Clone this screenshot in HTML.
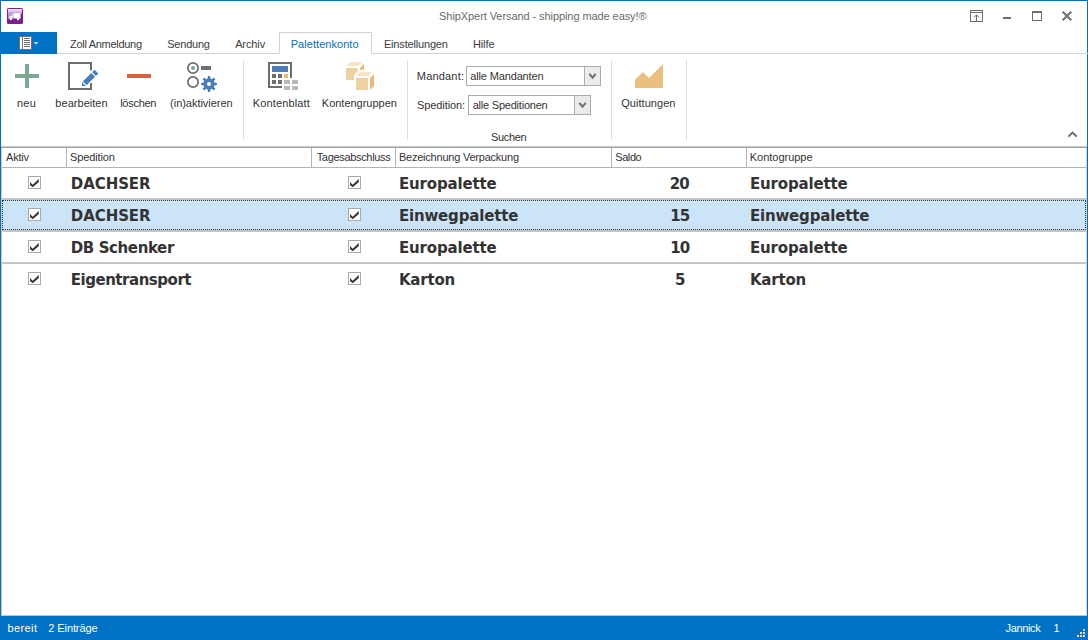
<!DOCTYPE html>
<html lang="de">
<head>
<meta charset="utf-8">
<title>ShipXpert Versand - shipping made easy!</title>
<style>
*{box-sizing:border-box;margin:0;padding:0}
html,body{width:1088px;height:640px;overflow:hidden;background:#fff}
body{font-family:"Liberation Sans",sans-serif;font-size:11px;color:#333;position:relative}
#win{position:absolute;left:0;top:0;width:1088px;height:640px;border:1px solid #0072c6;border-bottom:none;background:#fff}
.t{position:absolute;white-space:pre;line-height:14px;height:14px}
.abs{position:absolute}
/* title */
/* file tab */
#file{left:0;top:32px;width:57px;height:22px;background:#0072c6}
#tabline{left:57px;top:53px;width:1031px;height:1px;background:#d2d2d2}
#acttab{left:279px;top:32px;width:93px;height:22px;border:1px solid #d2d2d2;border-bottom:1px solid #fff;background:#fff}
.tab{top:37px;color:#3b3b3b}
.tab.on{color:#0072c6}
.sep{position:absolute;top:60px;width:1px;height:80px;background:#dcdcdc}
.lbl{top:96px;color:#333}
.combo{position:absolute;height:20px;border:1px solid #ababab;background:#fff}
.combo .btn{position:absolute;right:0;top:0;bottom:0;width:16px;background:#ebebeb;border-left:1px solid #ababab}
.combo .txt{position:absolute;left:4px;top:2px;line-height:14px;white-space:pre;color:#333}
/* grid */
#gtop1{left:1px;top:146px;width:1086px;height:1px;background:#c8c8c8}
#gtop2{left:1px;top:147px;width:1086px;height:1px;background:#a6a6a6}
#gleft{left:1px;top:148px;width:1px;height:468px;background:#cfc8c1}
#gright{left:1086px;top:148px;width:1px;height:468px;background:#d6d0ca}
#gbot{left:1px;top:615px;width:1086px;height:1px;background:#c9c0b8}
#hbot{left:2px;top:167px;width:1084px;height:1px;background:#b4b4b4}
.cs{position:absolute;top:148px;width:1px;height:19px;background:#b4b4b4}
.h{top:150px;color:#333}
.rl{position:absolute;left:2px;width:1084px;height:2px;background:#c4c4c4}
.b{position:absolute;white-space:pre;font-family:"DejaVu Sans","Liberation Sans",sans-serif;font-weight:bold;font-size:15px;line-height:20px;height:20px;color:#333}

.cb{position:absolute;width:13px;height:13px;border:1px solid #a8a8a8;background:#fff}
#sel{left:2px;top:200px;width:1084px;height:30px;background:#cce4f7;border:1px dotted #333}
/* status */
#status{left:0;top:616px;width:1088px;height:24px;background:#0072c6}
.st{color:#fff}
#icons{z-index:5;pointer-events:none}
.cb svg{display:block}
</style>
</head>
<body>
<div id="win"></div>
<div class="abs" id="tabline"></div>
<div class="abs" id="file"></div>
<div class="abs" id="acttab"></div>
<div class="sep" style="left:243px"></div>
<div class="sep" style="left:407px"></div>
<div class="combo" style="left:466px;top:66px;width:135px"><span class="btn"></span></div>
<div class="combo" style="left:468px;top:95px;width:123px"><span class="btn"></span></div>
<div class="sep" style="left:611px"></div>
<div class="sep" style="left:686px"></div>
<div class="abs" id="gtop1"></div><div class="abs" id="gtop2"></div>
<div class="abs" id="gleft"></div><div class="abs" id="gright"></div>
<div class="abs" id="hbot"></div><div class="abs" id="gbot"></div>
<div class="cs" style="left:66px"></div><div class="cs" style="left:311px"></div><div class="cs" style="left:395px"></div><div class="cs" style="left:611px"></div><div class="cs" style="left:746px"></div>
<div class="abs" id="sel"></div>
<div class="rl" style="top:198px"></div>
<div class="rl" style="top:230px"></div>
<div class="rl" style="top:262px"></div>
<div class="abs" id="status"></div>
<div class="t" id="title" style="left:439.12px;top:9px;letter-spacing:-0.077px;color:#6a6a6a">ShipXpert Versand - shipping made easy!®</div>
<div class="t tab" id="tb1" style="left:70.06px;top:37px;letter-spacing:-0.296px;">Zoll Anmeldung</div>
<div class="t tab" id="tb2" style="left:167.22px;top:37px;letter-spacing:-0.217px;">Sendung</div>
<div class="t tab" id="tb3" style="left:235.14px;top:37px;letter-spacing:-0.106px;">Archiv</div>
<div class="t tab on" id="tb4" style="left:290.74px;top:37px;letter-spacing:0.046px;">Palettenkonto</div>
<div class="t tab" id="tb5" style="left:383.94px;top:37px;letter-spacing:-0.174px;">Einstellungen</div>
<div class="t tab" id="tb6" style="left:472.94px;top:37px;letter-spacing:-0.108px;">Hilfe</div>
<div class="t lbl" id="l1" style="left:17.00px;top:96px;letter-spacing:0.200px;">neu</div>
<div class="t lbl" id="l2" style="left:55.35px;top:96px;letter-spacing:0.032px;">bearbeiten</div>
<div class="t lbl" id="l3" style="left:120.17px;top:96px;letter-spacing:-0.267px;">löschen</div>
<div class="t lbl" id="l4" style="left:170.09px;top:96px;letter-spacing:-0.030px;">(in)aktivieren</div>
<div class="t lbl" id="l5" style="left:252.75px;top:96px;letter-spacing:0.139px;">Kontenblatt</div>
<div class="t lbl" id="l6" style="left:321.82px;top:96px;letter-spacing:-0.016px;">Kontengruppen</div>
<div class="t lbl" id="l7" style="left:621.21px;top:96px;letter-spacing:0.052px;">Quittungen</div>
<div class="t" id="m1" style="left:416.80px;top:69px;letter-spacing:0.185px;">Mandant:</div>
<div class="t" id="m2" style="left:470.21px;top:69px;letter-spacing:-0.141px;">alle Mandanten</div>
<div class="t" id="m3" style="left:417.03px;top:98px;letter-spacing:-0.090px;">Spedition:</div>
<div class="t" id="m4" style="left:472.71px;top:98px;letter-spacing:-0.217px;">alle Speditionen</div>
<div class="t" id="m5" style="left:491.07px;top:130px;letter-spacing:-0.365px;">Suchen</div>
<div class="t h" id="h1" style="left:6.02px;top:150px;letter-spacing:-0.219px;">Aktiv</div>
<div class="t h" id="h2" style="left:70.07px;top:150px;letter-spacing:-0.134px;">Spedition</div>
<div class="t h" id="h3" style="left:316.66px;top:150px;letter-spacing:-0.320px;">Tagesabschluss</div>
<div class="t h" id="h4" style="left:398.94px;top:150px;letter-spacing:-0.223px;">Bezeichnung Verpackung</div>
<div class="t h" id="h5" style="left:615.22px;top:150px;letter-spacing:-0.411px;">Saldo</div>
<div class="t h" id="h6" style="left:749.82px;top:150px;letter-spacing:-0.028px;">Kontogruppe</div>
<div class="t st" id="s1" style="left:7.59px;top:621px;letter-spacing:0.368px;">bereit</div>
<div class="t st" id="s2" style="left:48.33px;top:621px;letter-spacing:-0.100px;">2 Einträge</div>
<div class="t st" id="s3" style="left:1005.58px;top:621px;letter-spacing:-0.352px;">Jannick</div>
<div class="t st" id="s4" style="left:1053.41px;top:621px;letter-spacing:0.000px;">1</div>
<div class="b" id="r0a" style="left:70.76px;top:174px;letter-spacing:-0.061px;">DACHSER</div>
<div class="b" id="r0b" style="left:398.89px;top:174px;letter-spacing:-0.147px;">Europalette</div>
<div class="b n" id="r0c" style="left:669.72px;top:174px;letter-spacing:-0.900px;">20</div>
<div class="b" id="r0d" style="left:749.89px;top:174px;letter-spacing:-0.147px;">Europalette</div>
<div class="b" id="r1a" style="left:70.76px;top:206px;letter-spacing:-0.061px;">DACHSER</div>
<div class="b" id="r1b" style="left:398.89px;top:206px;letter-spacing:-0.171px;">Einwegpalette</div>
<div class="b n" id="r1c" style="left:670.25px;top:206px;letter-spacing:-0.900px;">15</div>
<div class="b" id="r1d" style="left:749.89px;top:206px;letter-spacing:-0.171px;">Einwegpalette</div>
<div class="b" id="r2a" style="left:70.76px;top:238px;letter-spacing:-0.395px;">DB Schenker</div>
<div class="b" id="r2b" style="left:398.89px;top:238px;letter-spacing:-0.147px;">Europalette</div>
<div class="b n" id="r2c" style="left:670.25px;top:238px;letter-spacing:-0.900px;">10</div>
<div class="b" id="r2d" style="left:749.89px;top:238px;letter-spacing:-0.147px;">Europalette</div>
<div class="b" id="r3a" style="left:70.76px;top:270px;letter-spacing:-0.472px;">Eigentransport</div>
<div class="b" id="r3b" style="left:398.89px;top:270px;letter-spacing:-0.186px;">Karton</div>
<div class="b n" id="r3c" style="left:674.95px;top:270px;letter-spacing:0.000px;">5</div>
<div class="b" id="r3d" style="left:749.89px;top:270px;letter-spacing:-0.186px;">Karton</div>
<div class="cb" style="left:28px;top:176px"><svg width="11" height="11" viewBox="1 1 11 11"><path d="M2,6 L4.7,8.7 L10.8,3 V6 L4.7,11.2 L2,9 Z" fill="#333"/></svg></div>
<div class="cb" style="left:348px;top:176px"><svg width="11" height="11" viewBox="1 1 11 11"><path d="M2,6 L4.7,8.7 L10.8,3 V6 L4.7,11.2 L2,9 Z" fill="#333"/></svg></div>
<div class="cb" style="left:28px;top:208px"><svg width="11" height="11" viewBox="1 1 11 11"><path d="M2,6 L4.7,8.7 L10.8,3 V6 L4.7,11.2 L2,9 Z" fill="#333"/></svg></div>
<div class="cb" style="left:348px;top:208px"><svg width="11" height="11" viewBox="1 1 11 11"><path d="M2,6 L4.7,8.7 L10.8,3 V6 L4.7,11.2 L2,9 Z" fill="#333"/></svg></div>
<div class="cb" style="left:28px;top:240px"><svg width="11" height="11" viewBox="1 1 11 11"><path d="M2,6 L4.7,8.7 L10.8,3 V6 L4.7,11.2 L2,9 Z" fill="#333"/></svg></div>
<div class="cb" style="left:348px;top:240px"><svg width="11" height="11" viewBox="1 1 11 11"><path d="M2,6 L4.7,8.7 L10.8,3 V6 L4.7,11.2 L2,9 Z" fill="#333"/></svg></div>
<div class="cb" style="left:28px;top:272px"><svg width="11" height="11" viewBox="1 1 11 11"><path d="M2,6 L4.7,8.7 L10.8,3 V6 L4.7,11.2 L2,9 Z" fill="#333"/></svg></div>
<div class="cb" style="left:348px;top:272px"><svg width="11" height="11" viewBox="1 1 11 11"><path d="M2,6 L4.7,8.7 L10.8,3 V6 L4.7,11.2 L2,9 Z" fill="#333"/></svg></div>

<svg class="abs" id="icons" style="left:0;top:0" width="1088" height="640" viewBox="0 0 1088 640">
<defs>
<linearGradient id="pg" x1="0" y1="0" x2="0" y2="1"><stop offset="0" stop-color="#f1e6f4"/><stop offset="0.2" stop-color="#dcc6e3"/><stop offset="0.45" stop-color="#bd96c9"/><stop offset="1" stop-color="#b286c0"/></linearGradient>
</defs>
<!-- app icon -->
<rect x="7" y="8" width="16" height="16" rx="1.6" fill="#7a1f8c"/>
<path d="M8,9 H22 V13.6 C18,14.2 12,16.5 8,19.5 Z" fill="url(#pg)"/>
<rect x="13.6" y="13.2" width="7" height="5.3" fill="#fff"/>
<path d="M9.2,18.5 V16 L10.4,14.5 H13.6 V18.5 Z" fill="#f1e7f4"/>
<rect x="10" y="15.2" width="1.8" height="0.9" fill="#a56fb6"/>
<circle cx="10.9" cy="19" r="1.25" fill="#fff"/><circle cx="18" cy="19" r="1.25" fill="#fff"/>
<!-- file button icon -->
<rect x="19.5" y="36.5" width="12" height="13" fill="#fff" stroke="#7b6e64" stroke-width="1"/>
<rect x="22" y="37" width="1" height="12" fill="#7b6e64"/>
<g fill="#6a6a6a"><rect x="24" y="38" width="6" height="1"/><rect x="24" y="40" width="6" height="1"/><rect x="24" y="42" width="6" height="1"/><rect x="24" y="44" width="6" height="1"/><rect x="24" y="46" width="6" height="1"/></g>
<path d="M33.5,42 H38.5 L36,44.8 Z" fill="#d4d0cc"/>
<!-- window buttons -->
<g fill="none" stroke="#6e6e6e">
<rect x="970.5" y="10.5" width="12" height="11" stroke-width="1"/>
<path d="M971,12.5 H982" stroke-width="1"/>
<path d="M976.5,21 V15 M974,17.5 L976.5,14.8 L979,17.5" stroke-width="1"/>
<path d="M1003,18 H1011" stroke-width="2"/>
<rect x="1032.5" y="12.5" width="9" height="8" stroke-width="1"/>
<path d="M1032,12 H1042" stroke-width="2"/>
<path d="M1062.7,11.7 L1071.3,20.3 M1071.3,11.7 L1062.7,20.3" stroke-width="2"/>
<path d="M1068.3,136.6 L1072.5,132.6 L1076.7,136.6" stroke-width="2"/>
</g>
<!-- neu -->
<path d="M25,64 H29 V74 H39 V78 H29 V88 H25 V78 H15 V74 H25 Z" fill="#7aa894"/>
<!-- bearbeiten -->
<path d="M91,70.5 V63 H69 V89 H91 V83" fill="none" stroke="#6e6e6e" stroke-width="2"/>
<g transform="translate(82,86) rotate(-45)" fill="#4a7ebb"><path d="M0,0 L2.6,-2.6 V2.6 Z"/><rect x="3.8" y="-2.7" width="12" height="5.4"/><rect x="17" y="-2.7" width="3.4" height="5.4"/></g>
<!-- loeschen -->
<rect x="127" y="74" width="24" height="4" fill="#d9603c"/>
<!-- (in)aktivieren -->
<circle cx="193" cy="68" r="5.15" fill="#fff" stroke="#6e6e6e" stroke-width="1.7"/>
<circle cx="193" cy="68" r="2" fill="#6fa892"/>
<rect x="201" y="66" width="10" height="4" fill="#6e6e6e"/>
<circle cx="193" cy="82" r="5.15" fill="#fff" stroke="#6e6e6e" stroke-width="1.7"/>
<path d="M207.56,78.59 L207.88,76.08 L210.12,76.08 L210.44,78.59 L211.81,79.16 L213.81,77.61 L215.39,79.19 L213.84,81.19 L214.41,82.56 L216.92,82.88 L216.92,85.12 L214.41,85.44 L213.84,86.81 L215.39,88.81 L213.81,90.39 L211.81,88.84 L210.44,89.41 L210.12,91.92 L207.88,91.92 L207.56,89.41 L206.19,88.84 L204.19,90.39 L202.61,88.81 L204.16,86.81 L203.59,85.44 L201.08,85.12 L201.08,82.88 L203.59,82.56 L204.16,81.19 L202.61,79.19 L204.19,77.61 L206.19,79.16Z" fill="#4a7ebb"/>
<circle cx="209" cy="84" r="2" fill="#fff"/>
<!-- Kontenblatt -->
<path d="M291,78 V63 H269 V87 H282" fill="none" stroke="#6e6e6e" stroke-width="2"/>
<rect x="272" y="66" width="16" height="6" fill="#4a7ebb"/>
<g fill="#6e6e6e"><rect x="272" y="74" width="4" height="4"/><rect x="278" y="74" width="4" height="4"/><rect x="272" y="80" width="4" height="4"/><rect x="278" y="80" width="4" height="4"/></g>
<rect x="284" y="74" width="4" height="4" fill="#e8b96f"/>
<g fill="#b9b9b9"><rect x="284" y="80" width="6" height="4"/><rect x="292" y="80" width="6" height="4"/><rect x="284" y="86" width="6" height="4"/><rect x="292" y="86" width="6" height="4"/></g>
<!-- Kontengruppen -->
<path d="M346,66 L350.4,62 H362.2 L358.5,66 Z" fill="#f8e4c4"/>
<path d="M346,68 H358 V71 L354,75 V80 H346 Z" fill="#efd0a0"/>
<path d="M360,68 L364,63.8 V69.8 H360 Z" fill="#e8bb78"/>
<path d="M356,76 L359.8,72 H372.2 L368.5,76 Z" fill="#f8e4c4"/>
<rect x="356" y="78" width="12" height="12" fill="#efd0a0"/>
<path d="M370,78 L374,73.8 V86 L370,90 Z" fill="#e8bb78"/>
<!-- combos arrows -->
<g fill="none" stroke="#6e6e6e" stroke-width="2"><path d="M589.3,73.8 L592.5,77.6 L595.7,73.8"/><path d="M579.3,102.8 L582.5,106.6 L585.7,102.8"/></g>
<!-- Quittungen -->
<path d="M635,88 V79.8 L643,72 L649,78 L663,64 V88 Z" fill="#e9c07e"/>
<!-- grip -->
<g fill="#f0d2b4"><rect x="1077" y="635" width="2" height="2"/><rect x="1080" y="635" width="2" height="2"/><rect x="1083" y="635" width="2" height="2"/><rect x="1080" y="632" width="2" height="2"/><rect x="1083" y="632" width="2" height="2"/><rect x="1083" y="629" width="2" height="2"/></g>
</svg>

</body>
</html>
